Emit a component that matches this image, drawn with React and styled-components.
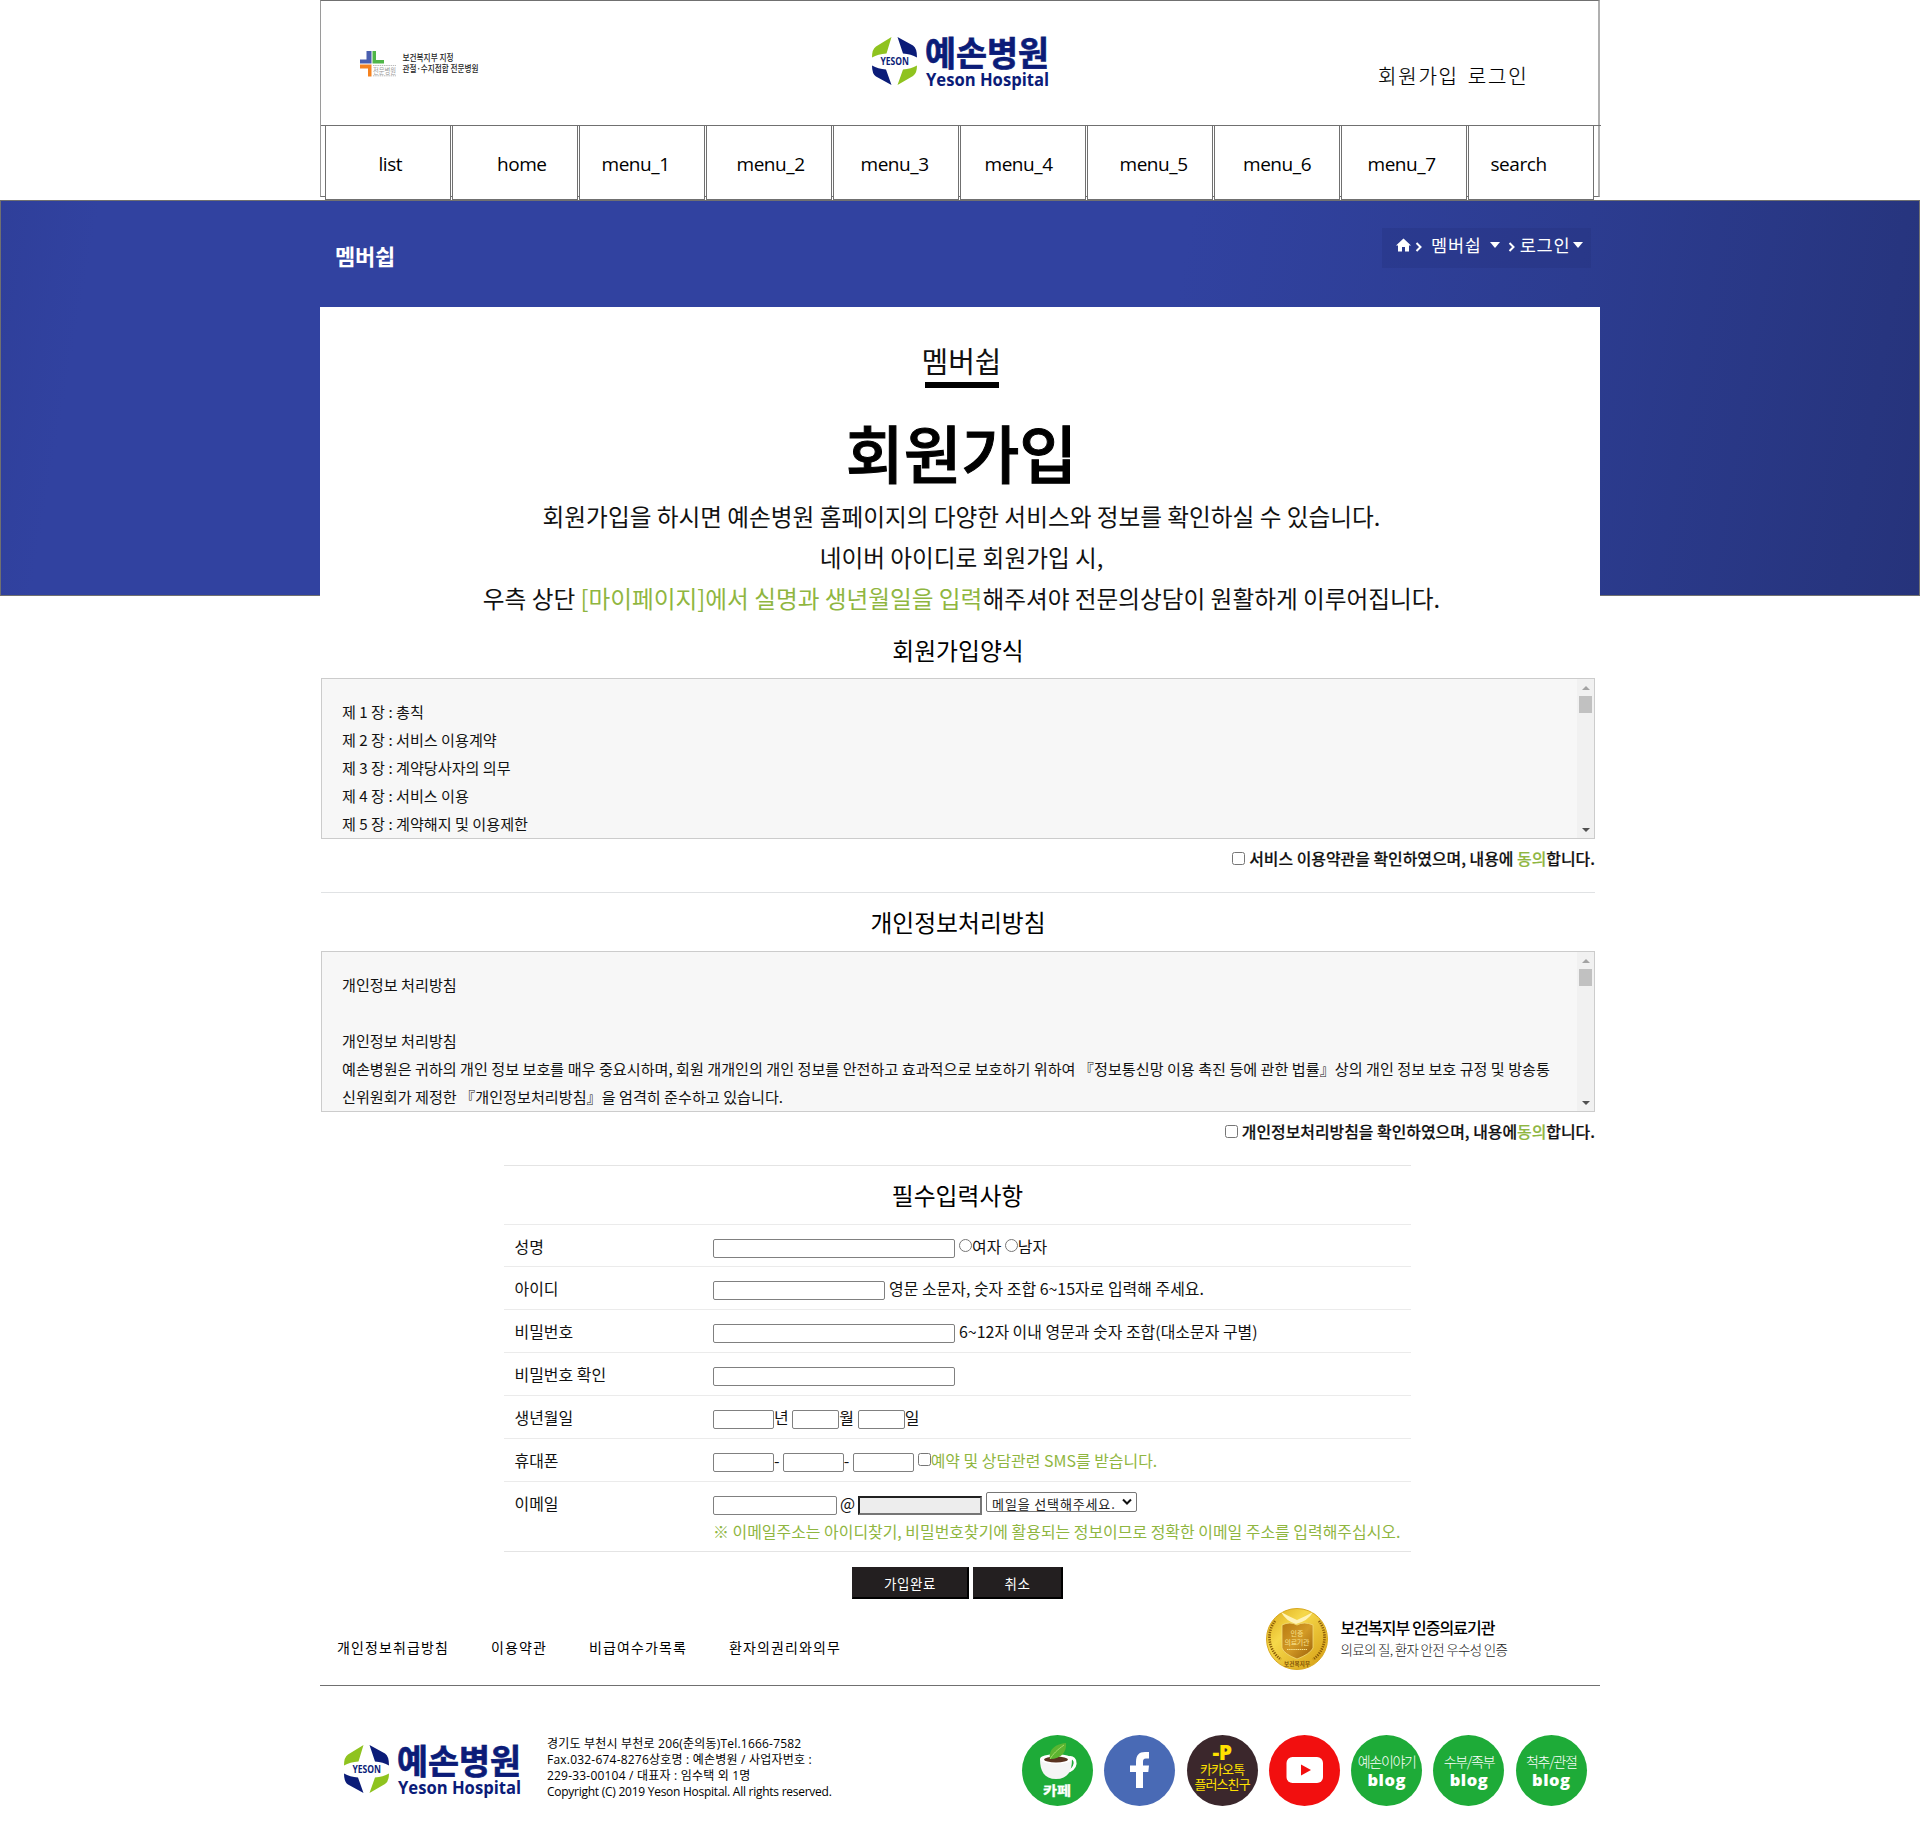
import React from "react";
import styled, { createGlobalStyle } from "styled-components";

const KR = `"Noto Sans CJK KR", sans-serif`;
const UI = `"Open Sans", "Noto Sans CJK KR", sans-serif`;
const GREEN = "#8fb63f";
const LINE = "#707070";

const Global = createGlobalStyle`
  *, *::before, *::after { box-sizing: border-box; }
  body { margin: 0; background: #fff; color: #111; font-family: ${KR}; }
  h1, h2, p { margin: 0; font-weight: 400; }
  svg { overflow: visible; }
`;

const Page = styled.div`
  width: 1920px;
  height: 1842px;
  overflow: hidden;
`;

/* ---------- header ---------- */
const Header = styled.header`
  width: 1280px;
  height: 197px;
  margin: 0 auto 3px;
  border: 1px solid ${LINE};
  border-left-color: #9a9a9a;
  border-right: 2px solid #b0b0b0;
`;
const TopBar = styled.div`
  display: flex;
  height: 124px;
`;
const BadgeSlot = styled.div`
  width: 551px;
  padding: 47px 0 0 39px;
`;
const LogoSlot = styled.div`
  width: 506px;
  padding-top: 34px;
`;
const Account = styled.div`
  display: flex;
  gap: 9px;
  padding-top: 59px;
  font: 300 20px/32px ${KR};
  -webkit-text-stroke: 0.2px #000;
  letter-spacing: 1.8px;
  color: #000;
`;
const Nav = styled.nav`
  display: flex;
  gap: 1px;
  width: 1280px;
  height: 75px;
  padding-left: 4px;
  border-top: 1px solid ${LINE};
`;
const NavItem = styled.a`
  flex: none;
  width: 126px;
  height: 74px;
  padding-left: ${(p) => p.$inset}px;
  background: #fff;
  border: 1px solid ${LINE};
  border-top: 0;
  font: 400 19px/77px ${UI};
  letter-spacing: -0.45px;
  color: #000;
`;

/* ---------- banner and card ---------- */
const Main = styled.main`
  display: grid;
  grid-template-columns: 1920px;
  height: 1399px;
`;
const Banner = styled.div`
  grid-area: 1 / 1;
  height: 396px;
  border: 1px solid ${LINE};
  background: linear-gradient(100deg, #2f3f9a 0, #3142a0 5%, #3142a0 60%, #2c3c90 80%, #27357f 96%, #26337b 100%);
`;
const Content = styled.div`
  grid-area: 1 / 1;
  width: 1280px;
  margin: 0 auto;
`;
const BannerHead = styled.div`
  display: flex;
  justify-content: space-between;
  height: 107px;
  padding: 28px 9px 0 15px;
  color: #fff;
`;
const BannerTitle = styled.div`
  padding-top: 7px;
  font: 700 22px/40px ${KR};
  letter-spacing: -0.2px;
`;
const Crumbs = styled.div`
  display: flex;
  align-items: center;
  width: 209px;
  height: 40px;
  padding: 0 0 7px 14px;
  background: rgba(30, 40, 110, 0.2);
  font: 400 17.5px/30px ${KR};
`;
const Crumb = styled.span`
  margin: 0 ${(p) => p.$after}px 0 ${(p) => p.$before}px;
  letter-spacing: 0.8px;
`;
const Caret = styled.i`
  border: 5px solid transparent;
  border-top: 6px solid #fff;
  border-bottom: 0;
`;
const Card = styled.section`
  height: 1292px;
  padding-top: 33px;
  background: #fff;
`;
const Intro = styled.div`
  display: flex;
  flex-direction: column;
  align-items: center;
  height: 281px;
  padding-left: 3px;
  text-align: center;
`;
const Kicker = styled.h2`
  font-size: 29px;
  line-height: 41px;
`;
const Bar = styled.div`
  width: 74px;
  height: 6px;
  margin: 1px 0 23px;
  background: #000;
`;
const Title = styled.h1`
  font-size: 62.9px;
  line-height: 80px;
  font-weight: 500;
  -webkit-text-stroke: 1px #000;
  color: #000;
`;
const Lead = styled.p`
  font-size: 23.67px;
  line-height: 41px;
  margin-top: 5px;
  white-space: nowrap;
`;
const Accent = styled.span`
  color: ${GREEN};
`;
const Sheet = styled.div`
  width: 1274px;
  margin-left: 1px;
`;
const Heading = styled.h2`
  font-size: 23.8px;
  line-height: ${(p) => p.$height}px;
  height: ${(p) => p.$height}px;
  text-align: center;
  color: #000;
`;

/* ---------- terms ---------- */
const Terms = styled.div`
  display: flex;
  justify-content: space-between;
  height: 161px;
  background: #f7f7f7;
  border: 1px solid #ccc;
  overflow: hidden;
`;
const TermsText = styled.div`
  padding: 18px 0 0 20px;
  font-size: 15.13px;
  line-height: 28px;
  white-space: pre;
`;
const ScrollTrack = styled.div`
  display: flex;
  flex-direction: column;
  align-items: center;
  width: 17px;
  padding: 7px 0 6px;
  background: #f1f1f1;
`;
const ScrollUp = styled.i`
  border: 4px solid transparent;
  border-bottom: 4px solid #a3a3a3;
  border-top: 0;
`;
const ScrollDown = styled.i`
  margin-top: auto;
  border: 4px solid transparent;
  border-top: 4px solid #505050;
  border-bottom: 0;
`;
const ScrollThumb = styled.div`
  width: 13px;
  height: 17px;
  margin-top: 6px;
  background: #c1c1c1;
`;
const Agree = styled.label`
  display: flex;
  justify-content: flex-end;
  align-items: center;
  height: ${(p) => p.$height}px;
  padding-bottom: ${(p) => (p.$ruled ? 14 : 13)}px;
  font-size: 15.92px;
  font-weight: 500;
  -webkit-text-stroke: 0.2px;
  white-space: pre;
  border-bottom: ${(p) => (p.$ruled ? "1px solid #e0e2e4" : "0")};
`;
const Check = styled.input`
  flex: none;
  width: 13px;
  height: 13px;
  margin: 0 ${(p) => p.$gap || 0}px 0 ${(p) => p.$before || 0}px;
`;

/* ---------- form ---------- */
const Form = styled.form`
  width: 907px;
  margin-left: 183px;
  border-top: 1px solid #e4e4e4;
`;
const Row = styled.div`
  display: flex;
  height: ${(p) => (p.$tall ? 70.5 : 42.86)}px;
  padding: 7px 0 0 10.5px;
  border-top: 1px solid #ebebeb;
  font-size: 15.95px;
  line-height: 28px;
`;
const Label = styled.div`
  width: 198.5px;
`;
const Fields = styled.div`
  display: flex;
  align-items: center;
  height: 28px;
  white-space: pre;
`;
const Text = styled.span`
  margin: 0 ${(p) => p.$after || 0}px 0 ${(p) => p.$before || 0}px;
  color: ${(p) => (p.$accent ? GREEN : "inherit")};
`;
const Input = styled.input`
  width: ${(p) => p.$w}px;
  height: 19px;
  margin: 5px 0 0;
  padding: 0 2px;
  background: ${(p) => (p.disabled ? "#ededed" : "#fff")};
  border: ${(p) => (p.disabled ? "2px inset #767676" : "1px solid #808080")};
  border-radius: ${(p) => (p.disabled ? 0 : 2)}px;
`;
const SelectBox = styled.div`
  display: flex;
  align-items: flex-start;
  justify-content: space-between;
  width: 151px;
  height: 20px;
  margin: -1px 0 0 4px;
  padding: 0 4px 0 5px;
  border: 1px solid #767676;
  border-radius: 2px;
  font-size: 13px;
  line-height: 21px;
  letter-spacing: 0.85px;
  color: #222;
`;
const Buttons = styled.div`
  display: flex;
  justify-content: center;
  gap: 4px;
  padding: 15px 0 0;
  border-top: 1px solid #e4e4e4;
`;
const Button = styled.button`
  width: ${(p) => p.$w}px;
  height: 32px;
  padding: 0;
  background: #231f20;
  border: 1px solid #231f20;
  border-right: 2px solid #000;
  border-bottom: 2px solid #000;
  color: #fff;
  font: 400 13.5px/28px ${KR};
  letter-spacing: 0.6px;
`;

/* ---------- footer ---------- */
const Footer = styled.footer`
  width: 1280px;
  margin: 0 auto;
`;
const LinkRow = styled.div`
  display: flex;
  height: 87px;
  padding-left: 17px;
  border-bottom: 1px solid ${LINE};
  font: 400 14px/97px ${KR};
  color: #000;
`;
const FootLink = styled.a`
  width: ${(p) => p.$w}px;
  letter-spacing: 1.12px;
  white-space: nowrap;
`;
const SealSlot = styled.div`
  width: 74.5px;
  padding-top: 9px;
  line-height: 0;
`;
const SealText = styled.div`
  padding-top: 17px;
  white-space: nowrap;
`;
const SealTitle = styled.p`
  font: 500 16px/22px ${KR};
  letter-spacing: -0.95px;
`;
const SealNote = styled.p`
  font: 300 13.5px/22px ${KR};
  letter-spacing: -0.68px;
  color: #222;
`;
const FootMain = styled.div`
  display: flex;
  padding-top: 49px;
`;
const FootLogo = styled.div`
  width: 227px;
  padding: 8px 0 0 24px;
`;
const Address = styled.div`
  width: 475px;
  padding-top: 1px;
  font: 400 12px/16.1px ${UI};
  color: #000;
  white-space: pre;
`;
const AddressLine = styled.p`
  letter-spacing: ${(p) => p.$spacing}px;
`;
const Social = styled.div`
  display: flex;
  gap: 11.3px;
`;
const Round = styled.a`
  display: flex;
  flex-direction: column;
  align-items: center;
  justify-content: center;
  width: 71px;
  height: 71px;
  padding-bottom: ${(p) => p.$lift || 0}px;
  border-radius: 50%;
  background: ${(p) => p.$bg};
  color: ${(p) => p.$fg || "#fff"};
  white-space: nowrap;
`;
const BlogTop = styled.span`
  font: 300 14px/17px ${KR};
  letter-spacing: -1.3px;
`;
const BlogWord = styled.span`
  font: 800 16.5px/19px ${UI};
  letter-spacing: 0.5px;
`;
const KakaoMark = styled.span`
  font: 800 21px/18px ${UI};
  letter-spacing: -0.5px;
`;
const KakaoText = styled.span`
  font: 400 13px/15px ${KR};
  letter-spacing: -0.9px;
`;

const Logo = () => (
  <svg width="180" height="56" viewBox="0 0 180 56">
    <path d="M0 22.500Q0 14 4 11.500L19.500 2L14.500 18.500Q6 19 0 22.500Z" fill="#8fc31f" />
    <path d="M25.500 2L41 10.500Q45 13 45 22.500Q39 19 31 18.500Z" fill="#0b1c78" />
    <path d="M0 30.500Q6 34 14 34.500L19.500 50L4 41.500Q0 39 0 30.500Z" fill="#0b1c78" />
    <path d="M45 30.500Q45 38.500 41 41L25.500 50L31 34.500Q39 34 45 30.500Z" fill="#8fc31f" />
    <text x="8.500" y="30" textLength="28.500" lengthAdjust="spacingAndGlyphs" fontFamily={UI} fontWeight="700" fontSize="10" fill="#0b1c78">YESON</text>
    <text x="53" y="30.800" textLength="124" lengthAdjust="spacingAndGlyphs" fontFamily={KR} fontWeight="700" fontSize="34.500" fill="#0b1c78" stroke="#0b1c78" strokeWidth="0.700">예손병원</text>
    <text x="54" y="51" textLength="123" lengthAdjust="spacingAndGlyphs" fontFamily={UI} fontWeight="700" fontSize="17" fill="#0b1c78">Yeson Hospital</text>
  </svg>
);

const Badge = () => (
  <svg width="125" height="36" viewBox="0 0 125 36">
    <path d="M6.500 3H11.500V15.500H0V11.500H6.500Z" fill="#4a5fb0" />
    <path d="M12.500 3H16V12H24V15.500H12.500Z" fill="#4fb648" />
    <path d="M0 16.500H11.500V28.500H8V20.500H0Z" fill="#f58220" />
    <text x="13" y="25.500" textLength="23" lengthAdjust="spacingAndGlyphs" fontFamily={KR} fontSize="8.500" fill="#999">전문병원</text>
    <path d="M13 17.500H36M13 27.800H36" stroke="#bbb" strokeWidth="1" strokeDasharray="1.500 .7" />
    <text x="42.500" y="13.300" textLength="51" lengthAdjust="spacingAndGlyphs" fontFamily={KR} fontWeight="500" fontSize="9" fill="#222">보건복지부 지정</text>
    <text x="42.500" y="24.300" textLength="76" lengthAdjust="spacingAndGlyphs" fontFamily={KR} fontWeight="500" fontSize="9" fill="#222">관절·수지접합 전문병원</text>
  </svg>
);

const Chevron = () => (
  <svg width="8" height="10" viewBox="0 0 8 10">
    <path d="M1.500 1L5.500 5L1.500 9" fill="none" stroke="#fff" strokeWidth="2" />
  </svg>
);

const Home = () => (
  <svg width="15" height="14" viewBox="0 0 15 14">
    <path d="M7.500 0.500L15 7.500H13V13.500H9V9H6V13.500H2V7.500H0Z" fill="#fff" />
  </svg>
);

const Seal = () => (
  <svg width="62" height="62" viewBox="0 0 62 62">
    <defs>
      <linearGradient id="gold" x1="0" y1="0" x2="1" y2="1">
        <stop offset="0" stopColor="#d9a514" />
        <stop offset=".35" stopColor="#f6d84a" />
        <stop offset="1" stopColor="#d39a10" />
      </linearGradient>
      <linearGradient id="shield" x1="0" y1="0" x2="1" y2="1">
        <stop offset="0" stopColor="#b87a12" />
        <stop offset=".5" stopColor="#d39a26" />
        <stop offset="1" stopColor="#9a5f08" />
      </linearGradient>
    </defs>
    <circle cx="31" cy="31" r="30.500" fill="url(#gold)" stroke="#d8a820" />
    <path d="M16 17Q24 13 31 17Q38 13 47 17V40Q44 46 31 51Q18 46 16 40Z" fill="url(#shield)" stroke="#f3dc7a" strokeWidth=".8" />
    <path d="M15 4Q20 13 30 16Q42 13 47 4Q40 8 31 12Q22 8 15 4Z" fill="#fff3b8" />
    <text x="24.500" y="28" fontFamily={KR} fontSize="7" textLength="13" fill="#f8e28c">인증</text>
    <text x="18.500" y="37" fontFamily={KR} fontSize="7" textLength="25" fill="#f8e28c">의료기관</text>
    <path d="M21 41.500H41" stroke="#f8e28c" strokeWidth="1.200" strokeDasharray="1.500 .6" />
    <path d="M9 13A27 27 0 0 0 15 51.500M53 13A27 27 0 0 1 47 51.500" fill="none" stroke="#8a5a08" strokeWidth="2.600" strokeDasharray="1.300 1.100" />
    <text x="18" y="57.500" fontFamily={KR} fontWeight="700" fontSize="5.500" textLength="26" fill="#7a4c05">보건복지부</text>
  </svg>
);

const Cafe = () => (
  <svg width="71" height="71" viewBox="0 0 71 71">
    <path d="M46 23C56 20 56 36 43 37" fill="none" stroke="#fff" strokeWidth="3" />
    <path d="M18 24H50C50 36 46 44 34 44C22 44 18 36 18 24Z" fill="#f5f5f5" />
    <ellipse cx="34" cy="24" rx="16" ry="4.800" fill="#fff" />
    <ellipse cx="34" cy="24.500" rx="12" ry="3" fill="#5a3320" />
    <path d="M28 24C26 14 34 9 44 8C45 17 39 24 28 24Z" fill="#5cb531" />
    <path d="M28 24C31 19 35 15 42 10" stroke="#a6dc6a" fill="none" />
    <text x="21" y="59.500" fontFamily={KR} fontWeight="700" fontSize="13" textLength="28" lengthAdjust="spacingAndGlyphs" fill="#fff" stroke="#fff" strokeWidth=".3">카페</text>
  </svg>
);

const Facebook = () => (
  <svg width="71" height="71" viewBox="0 0 71 71">
    <path d="M32 53V37H26V30.500H32V27C32 20 35 17 41 17H45V23.500H42C39.500 23.500 39 25 39 27V30.500H45L44.300 37H39V53Z" fill="#fff" />
  </svg>
);

const YouTube = () => (
  <svg width="71" height="71" viewBox="0 0 71 71">
    <rect x="17.500" y="22" width="36.500" height="26" rx="6" fill="#fff" />
    <path d="M32 29.500L42 35L32 40.500Z" fill="#f20f0f" />
  </svg>
);

const MENU = [
  ["list", 52.5], ["home", 44], ["menu_1", 21.5], ["menu_2", 29.5], ["menu_3", 26.5],
  ["menu_4", 23.5], ["menu_5", 31.5], ["menu_6", 28], ["menu_7", 25.5], ["search", 21.5],
];

const LINKS = [["개인정보취급방침", 154], ["이용약관", 98], ["비급여수가목록", 140], ["환자의권리와의무", 537]];

const TERMS = [
  "제 1 장 : 총칙",
  "제 2 장 : 서비스 이용계약",
  "제 3 장 : 계약당사자의 의무",
  "제 4 장 : 서비스 이용",
  "제 5 장 : 계약해지 및 이용제한",
].join("\n");

const PRIVACY = [
  "개인정보 처리방침",
  "",
  "개인정보 처리방침",
  "예손병원은 귀하의 개인 정보 보호를 매우 중요시하며, 회원 개개인의 개인 정보를 안전하고 효과적으로 보호하기 위하여 『정보통신망 이용 촉진 등에 관한 법률』상의 개인 정보 보호 규정 및 방송통",
  "신위원회가 제정한 『개인정보처리방침』을 엄격히 준수하고 있습니다.",
].join("\n");

const ADDRESS = [
  ["경기도 부천시 부천로 206(춘의동)Tel.1666-7582", 0.2],
  ["Fax.032-674-8276상호명 : 예손병원 / 사업자번호 :", 0.21],
  ["229-33-00104 / 대표자 : 임수택 외 1명", 0.2],
  ["Copyright (C) 2019 Yeson Hospital. All rights reserved.", -0.26],
];

const TermsBox = ({ text }) => (
  <Terms>
    <TermsText>{text}</TermsText>
    <ScrollTrack>
      <ScrollUp />
      <ScrollThumb />
      <ScrollDown />
    </ScrollTrack>
  </Terms>
);

export default function App() {
  return (
    <Page>
      <Global />
      <Header>
        <TopBar>
          <BadgeSlot><Badge /></BadgeSlot>
          <LogoSlot><Logo /></LogoSlot>
          <Account><span>회원가입</span><span>로그인</span></Account>
        </TopBar>
        <Nav>
          {MENU.map(([label, inset]) => <NavItem key={label} $inset={inset}>{label}</NavItem>)}
        </Nav>
      </Header>

      <Main>
        <Banner />
        <Content>
          <BannerHead>
            <BannerTitle>멤버쉽</BannerTitle>
            <Crumbs>
              <Home />
              <Crumb $before={4} $after={8}><Chevron /></Crumb>
              <Crumb $before={0} $after={8}>멤버쉽</Crumb>
              <Caret />
              <Crumb $before={8} $after={4}><Chevron /></Crumb>
              <Crumb $before={0} $after={3}>로그인</Crumb>
              <Caret />
            </Crumbs>
          </BannerHead>
          <Card>
            <Intro>
              <Kicker>멤버쉽</Kicker>
              <Bar />
              <Title>회원가입</Title>
              <Lead>
                회원가입을 하시면 예손병원 홈페이지의 다양한 서비스와 정보를 확인하실 수 있습니다.<br />
                네이버 아이디로 회원가입 시,<br />
                우측 상단 <Accent>[마이페이지]에서 실명과 생년월일을 입력</Accent>해주셔야 전문의상담이 원활하게 이루어집니다.
              </Lead>
            </Intro>
            <Sheet>
              <Heading $height={57}>회원가입양식</Heading>
              <TermsBox text={TERMS} />
              <Agree $height={54} $ruled>
                <Check type="checkbox" $gap={4} />서비스 이용약관을 확인하였으며, 내용에 <Accent>동의</Accent>합니다.
              </Agree>
              <Heading $height={58}>개인정보처리방침</Heading>
              <TermsBox text={PRIVACY} />
              <Agree $height={52.5}>
                <Check type="checkbox" $gap={4} />개인정보처리방침을 확인하였으며, 내용에<Accent>동의</Accent>합니다.
              </Agree>
              <Form>
                <Heading $height={58}>필수입력사항</Heading>
                <Row>
                  <Label>성명</Label>
                  <Fields>
                    <Input $w={242} /><Check type="radio" $before={4} />여자<Check type="radio" $before={3.5} />남자
                  </Fields>
                </Row>
                <Row>
                  <Label>아이디</Label>
                  <Fields><Input $w={172} /><Text $before={4}>영문 소문자, 숫자 조합 6~15자로 입력해 주세요.</Text></Fields>
                </Row>
                <Row>
                  <Label>비밀번호</Label>
                  <Fields><Input $w={242} /><Text $before={4}>6~12자 이내 영문과 숫자 조합(대소문자 구별)</Text></Fields>
                </Row>
                <Row>
                  <Label>비밀번호 확인</Label>
                  <Fields><Input $w={242} /></Fields>
                </Row>
                <Row>
                  <Label>생년월일</Label>
                  <Fields>
                    <Input $w={61} /><Text $after={3.5}>년</Text>
                    <Input $w={47} /><Text $after={4}>월</Text>
                    <Input $w={47} /><Text>일</Text>
                  </Fields>
                </Row>
                <Row>
                  <Label>휴대폰</Label>
                  <Fields>
                    <Input $w={61} /><Text $after={3.3}>-</Text>
                    <Input $w={61} /><Text $after={3.3}>-</Text>
                    <Input $w={61} /><Check type="checkbox" $before={4} />
                    <Text $accent>예약 및 상담관련 SMS를 받습니다.</Text>
                  </Fields>
                </Row>
                <Row $tall>
                  <Label>이메일</Label>
                  <div>
                    <Fields>
                      <Input $w={124} /><Text $before={3} $after={3}>@</Text>
                      <Input $w={124} disabled />
                      <SelectBox>
                        메일을 선택해주세요.
                        <svg width="10" height="16" viewBox="0 0 10 16">
                          <path d="M1 6.500L5 10.500L9 6.500" fill="none" stroke="#111" strokeWidth="2" />
                        </svg>
                      </SelectBox>
                    </Fields>
                    <Text $accent>※ 이메일주소는 아이디찾기, 비밀번호찾기에 활용되는 정보이므로 정확한 이메일 주소를 입력해주십시오.</Text>
                  </div>
                </Row>
                <Buttons>
                  <Button type="button" $w={117}>가입완료</Button>
                  <Button type="button" $w={90}>취소</Button>
                </Buttons>
              </Form>
            </Sheet>
          </Card>
        </Content>
      </Main>

      <Footer>
        <LinkRow>
          {LINKS.map(([label, w]) => <FootLink key={label} $w={w}>{label}</FootLink>)}
          <SealSlot><Seal /></SealSlot>
          <SealText>
            <SealTitle>보건복지부 인증의료기관</SealTitle>
            <SealNote>의료의 질, 환자 안전 우수성 인증</SealNote>
          </SealText>
        </LinkRow>
        <FootMain>
          <FootLogo><Logo /></FootLogo>
          <Address>
            {ADDRESS.map(([line, spacing]) => <AddressLine key={line} $spacing={spacing}>{line}</AddressLine>)}
          </Address>
          <Social>
            <Round $bg="#1eab38"><Cafe /></Round>
            <Round $bg="#496ab5"><Facebook /></Round>
            <Round $bg="#3b272c" $fg="#ffe100" $lift={8}>
              <KakaoMark>-P</KakaoMark>
              <KakaoText>카카오톡</KakaoText>
              <KakaoText>플러스친구</KakaoText>
            </Round>
            <Round $bg="#f20f0f"><YouTube /></Round>
            {["예손이야기", "수부/족부", "척추/관절"].map((name) => (
              <Round key={name} $bg="#1eab38">
                <BlogTop>{name}</BlogTop>
                <BlogWord>blog</BlogWord>
              </Round>
            ))}
          </Social>
        </FootMain>
      </Footer>
    </Page>
  );
}
